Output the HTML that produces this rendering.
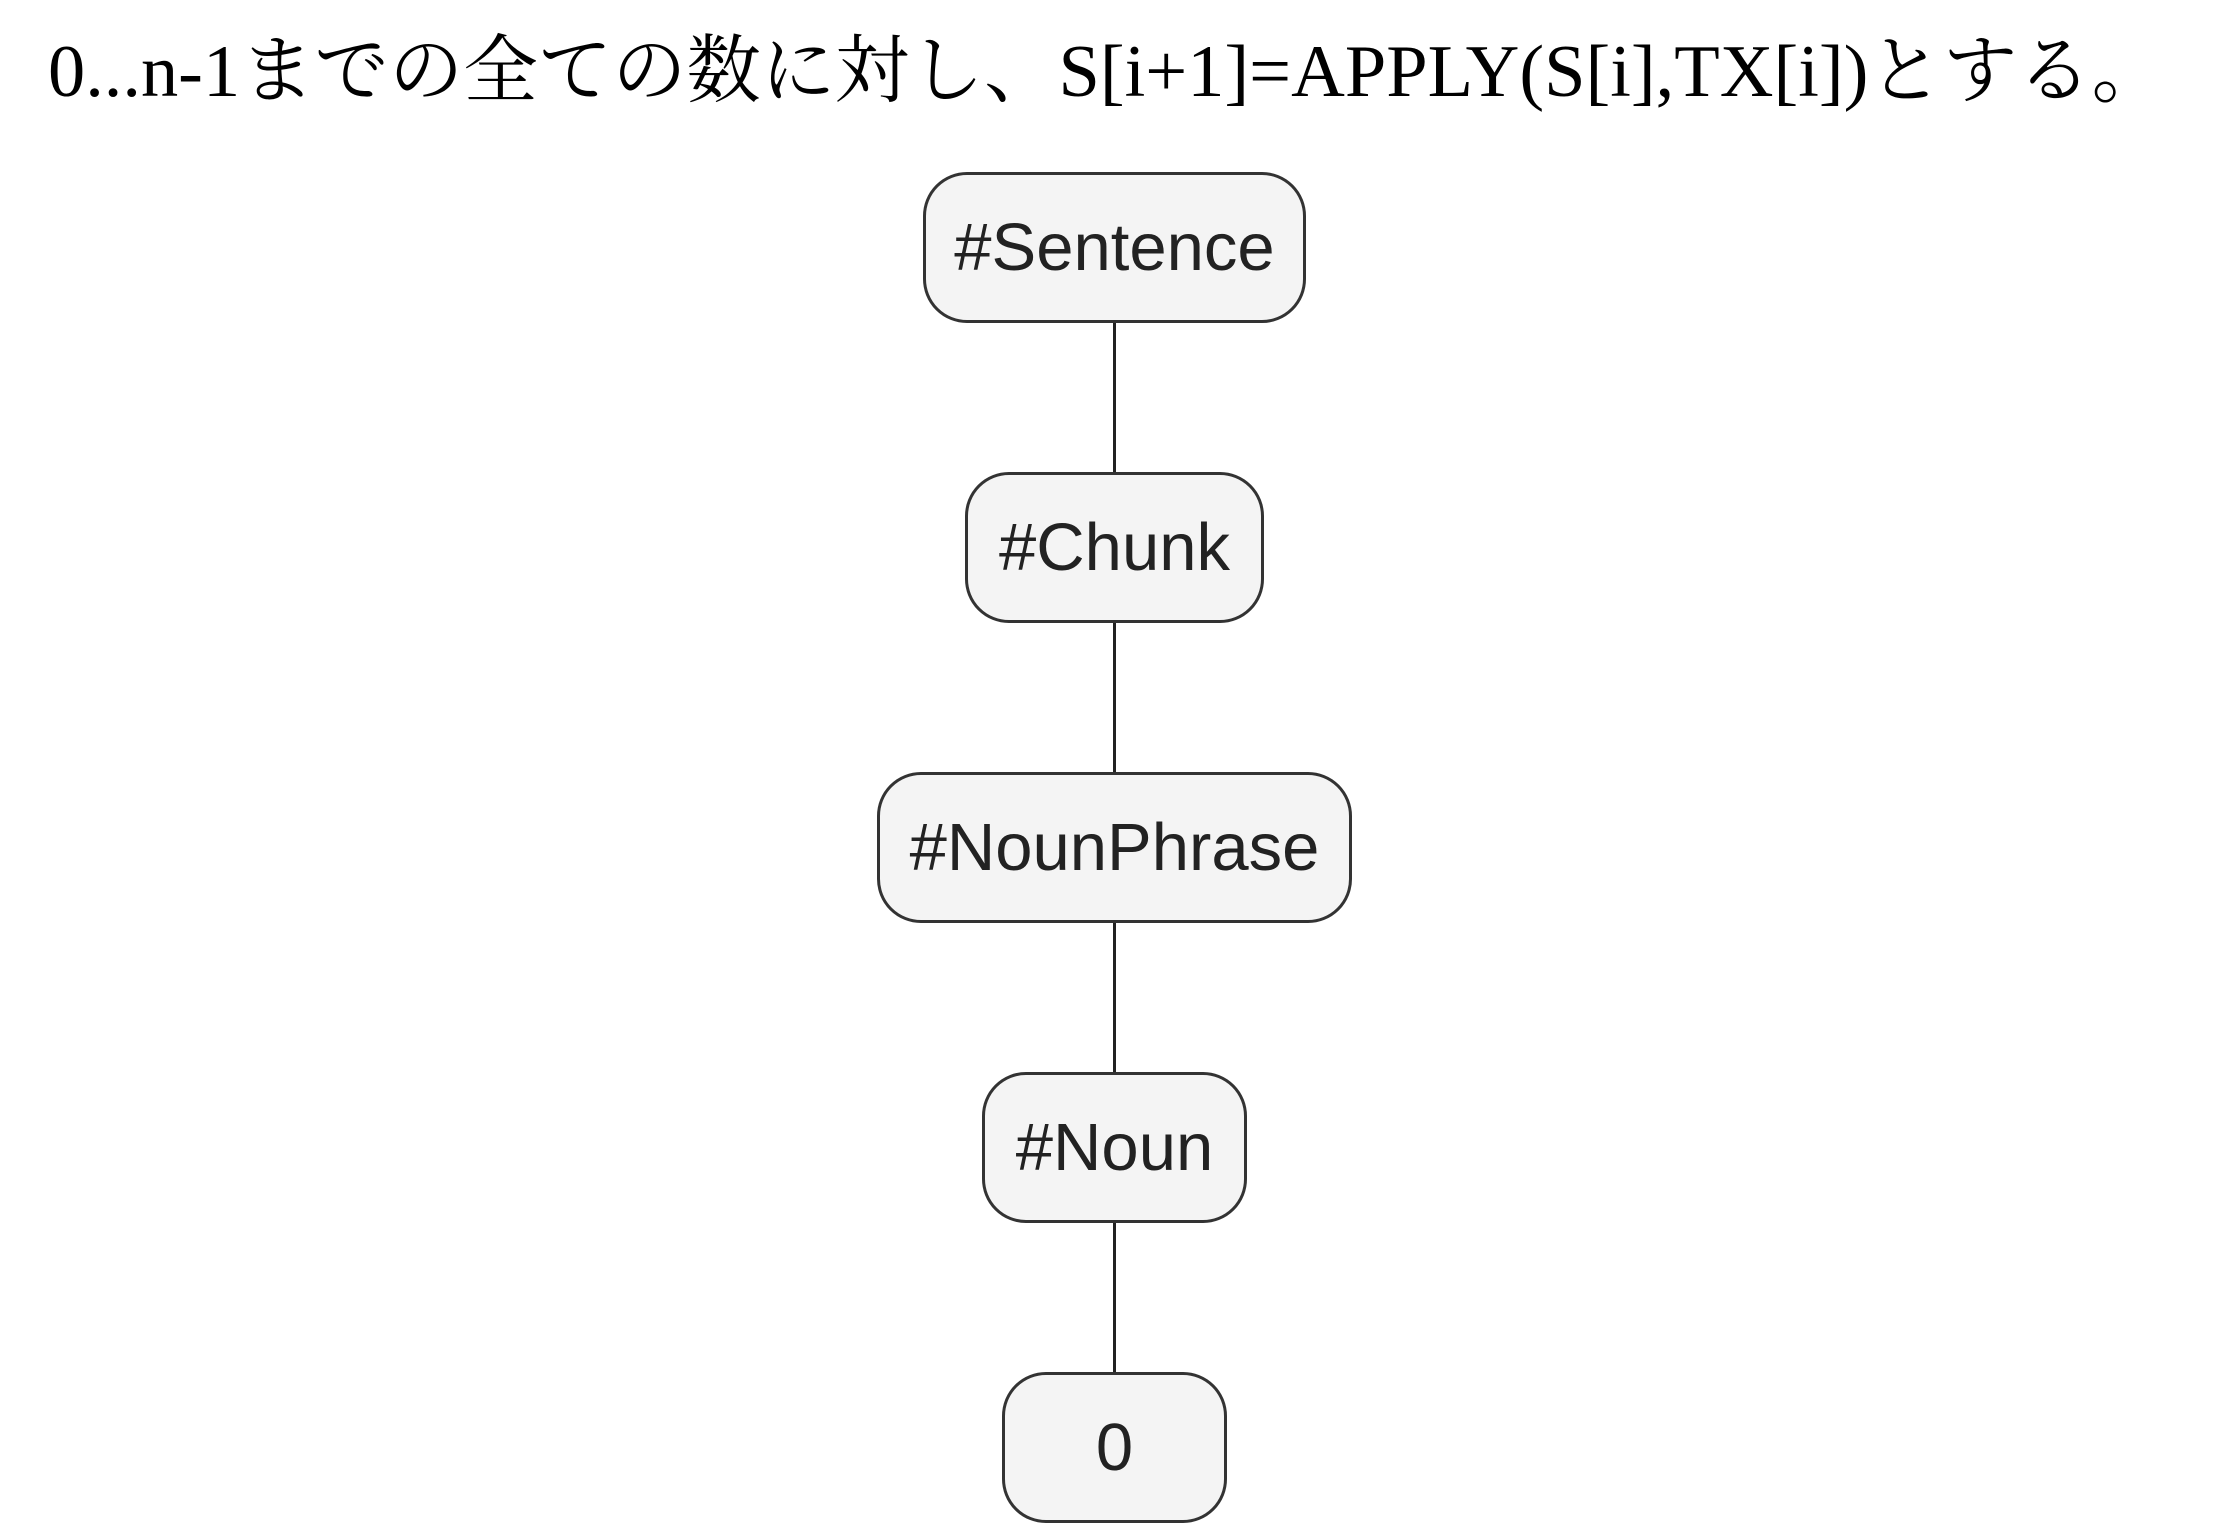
<!DOCTYPE html>
<html><head><meta charset="utf-8"><style>
html,body{margin:0;padding:0;background:#fff;width:2229px;height:1539px;overflow:hidden}
.t{position:absolute;left:48px;top:22px;font-family:"Liberation Serif","Noto Serif CJK JP",serif;font-size:74.4px;color:#000;white-space:nowrap;line-height:100px}
.b{position:absolute;box-sizing:border-box;border:3px solid #333;background:#f4f4f4;border-radius:44px;height:151px;display:flex;align-items:center;justify-content:center;font-family:"Liberation Sans",Arial,sans-serif;font-size:67px;color:#222}
.l{position:absolute;left:1113px;width:3px;background:#222}
</style></head><body>
<div class="t">0...n-1までの全ての数に対し、S[i+1]=APPLY(S[i],TX[i])とする。</div>
<div class="l" style="top:323px;height:150px"></div>
<div class="l" style="top:623px;height:150px"></div>
<div class="l" style="top:923px;height:150px"></div>
<div class="l" style="top:1223px;height:150px"></div>
<div class="b" style="left:923px;width:383px;top:172px">#Sentence</div>
<div class="b" style="left:965px;width:299px;top:472px">#Chunk</div>
<div class="b" style="left:877px;width:475px;top:772px">#NounPhrase</div>
<div class="b" style="left:982px;width:265px;top:1072px">#Noun</div>
<div class="b" style="left:1002px;width:225px;top:1372px">0</div>
</body></html>
